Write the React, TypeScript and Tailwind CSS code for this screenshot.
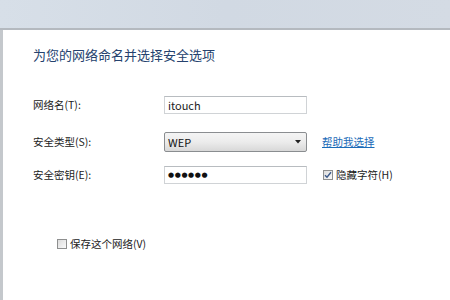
import React from "react";

const font = { fontFamily: '"Noto Sans CJK SC", "Noto Sans", sans-serif' };

function Check({ checked }: { checked?: boolean }) {
  return (
    <div className="w-[10px] h-[10px] border border-[#8e8f8f] bg-gradient-to-br from-[#dcdcdc] to-[#fafafa] flex items-center justify-center shrink-0">
      {checked && (
        <svg width="8" height="8" viewBox="0 0 8 8">
          <path d="M1 4.2 L3 6.3 L7 1.2" stroke="#3c5a8a" strokeWidth="1.4" fill="none" />
        </svg>
      )}
    </div>
  );
}

export default function App() {
  return (
    <div className="w-[450px] h-[300px] overflow-hidden bg-white flex flex-col" style={font}>
      <div className="h-[28px] bg-gradient-to-r from-[#d7dfe8] via-[#d1d9e3] to-[#d4dbe4] shrink-0" />
      <div className="h-[2px] bg-[#b4b9bf] shrink-0" />
      <div className="flex-1 flex">
        <div className="w-[3px] bg-[#c4c8cc] shrink-0" />
        <div className="flex-1 bg-white pl-[30px] pt-[16px]">
          <div className="text-[13px] leading-[17px] text-[#25426e]">为您的网络命名并选择安全选项</div>
          <div className="mt-[33px] flex items-center h-[18px]">
            <div className="w-[131px] text-[10.5px] text-[#222]">网络名(T):</div>
            <div className="w-[143px] h-[18px] border border-[#d0d3d6] border-t-[#b8bcc0] bg-white text-[11px] text-[#222] flex items-center pl-[3px]">itouch</div>
          </div>
          <div className="mt-[18px] flex items-center h-[20px]">
            <div className="w-[131px] text-[10.5px] text-[#222]">安全类型(S):</div>
            <div className="w-[143px] h-[20px] border border-[#8a8d90] rounded-[2px] bg-gradient-to-b from-[#f4f4f4] via-[#ececec] to-[#d8d8d8] text-[11px] text-[#111] flex items-center pl-[3px] pr-[5px] justify-between">
              <span>WEP</span>
              <svg width="6" height="4" viewBox="0 0 6 4">
                <path d="M0 0 H6 L3 3.5 Z" fill="#222" />
              </svg>
            </div>
            <div className="ml-[15px] text-[10.5px] text-[#1a6bb8] underline">帮助我选择</div>
          </div>
          <div className="mt-[14px] flex items-center h-[18px]">
            <div className="w-[131px] text-[10.5px] text-[#222]">安全密钥(E):</div>
            <div
              className="w-[143px] h-[18px] border border-[#d0d3d6] border-t-[#b8bcc0] bg-white text-[7px] text-[#111] flex items-center pl-[3px] tracking-[0.6px]"
              style={{ fontFamily: '"DejaVu Sans", sans-serif' }}
            >
              ●●●●●●
            </div>
            <div className="ml-[16px] flex items-center gap-[3px]">
              <Check checked />
              <span className="text-[10.5px] text-[#222]">隐藏字符(H)</span>
            </div>
          </div>
          <div className="mt-[52px] ml-[24px] flex items-center gap-[3px]">
            <Check />
            <span className="text-[10.5px] text-[#222]">保存这个网络(V)</span>
          </div>
        </div>
      </div>
    </div>
  );
}
